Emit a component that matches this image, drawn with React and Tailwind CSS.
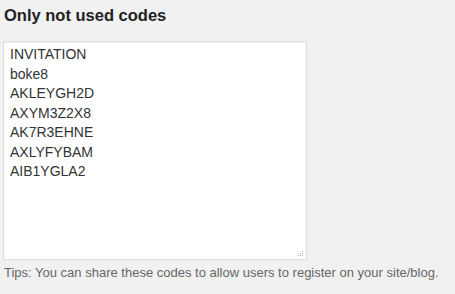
import React from 'react';

const codes = ['INVITATION', 'boke8', 'AKLEYGH2D', 'AXYM3Z2X8', 'AK7R3EHNE', 'AXLYFYBAM', 'AIB1YGLA2'];

const ResizeGrip = () => (
  <svg className="pointer-events-none absolute bottom-[3px] right-[3px]" width="7" height="7" viewBox="0 0 7 7">
    <rect x="5" y="1" width="1" height="1" fill="#b5b5b5" />
    <rect x="3" y="3" width="1" height="1" fill="#b5b5b5" />
    <rect x="5" y="3" width="1" height="1" fill="#b5b5b5" />
    <rect x="1" y="5" width="1" height="1" fill="#b5b5b5" />
    <rect x="3" y="5" width="1" height="1" fill="#b5b5b5" />
    <rect x="5" y="5" width="1" height="1" fill="#b5b5b5" />
  </svg>
);

const App = () => {
  return (
    <div className="min-h-[294px] w-[455px] bg-[#f1f1f1] px-[3px] pt-[5px] font-['Liberation_Sans',Arial,sans-serif]">
      <h3 className="text-[16.5px] font-bold leading-[20px] text-[#222] pl-[1px]">Only not used codes</h3>
      <div className="relative mt-[16px] w-[304px]">
        <textarea
          readOnly
          defaultValue={codes.join('\n')}
          className="block h-[219px] w-full resize-none border border-[#dddddd] bg-white px-[6px] py-[3px] text-[14px] leading-[19.5px] text-[#333] outline-none shadow-[inset_0_1px_2px_rgba(0,0,0,0.07)]"
        />
        <ResizeGrip />
      </div>
      <p className="mt-[4px] pl-[1px] text-[13px] leading-[18px] text-[#666]">
        Tips: You can share these codes to allow users to register on your site/blog.
      </p>
    </div>
  );
};

export default App;
